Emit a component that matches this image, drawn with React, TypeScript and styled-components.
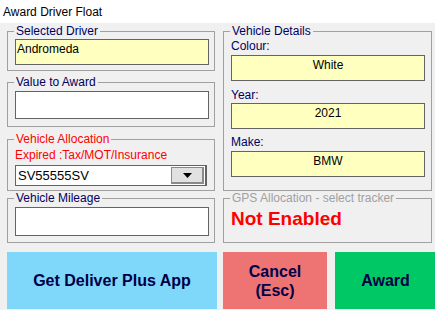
import React, { FC, ReactNode } from 'react'
import styled, { createGlobalStyle } from 'styled-components'

const GlobalStyle = createGlobalStyle`
  html, body {
    margin: 0;
    padding: 0;
    background: #f0f0f0;
  }
  body {
    font-family: "Liberation Sans", Arial, sans-serif;
    font-size: 12px;
  }
`

const Window = styled.div`
  width: 435px;
  height: 310px;
  overflow: hidden;
  background: #f0f0f0;
  display: flex;
  flex-direction: column;
`

const TitleBar = styled.div`
  height: 23px;
  background: #ffffff;
  display: flex;
  align-items: center;
  padding-left: 3px;
  font-size: 12px;
  color: #000000;
`

const Body = styled.div`
  display: flex;
  gap: 8px;
  padding: 8px 0 0 7px;
`

const Column = styled.div<{ $width: number }>`
  width: ${p => p.$width}px;
  display: flex;
  flex-direction: column;
`

const Group = styled.div<{ $height: number; $top?: number }>`
  position: relative;
  box-sizing: border-box;
  height: ${p => p.$height}px;
  margin-top: ${p => p.$top || 0}px;
  border: 1px solid #a0a0a0;
  padding: 7px 5px 0 7px;
  display: flex;
  flex-direction: column;
`

const Legend = styled.span<{ $color?: string }>`
  position: absolute;
  top: -8px;
  left: 6px;
  padding: 0 2px;
  background: #f0f0f0;
  font-size: 12px;
  line-height: 14px;
  color: ${p => p.$color || '#000060'};
`

const Field = styled.div<{ $height: number; $yellow?: boolean; $center?: boolean; $mt?: number }>`
  box-sizing: border-box;
  height: ${p => p.$height}px;
  width: 194px;
  margin-top: ${p => p.$mt || 0}px;
  border: 1px solid #646464;
  background: ${p => (p.$yellow ? '#ffffc0' : '#ffffff')};
  font-size: 12px;
  line-height: 14px;
  padding: 2px 1px;
  text-align: ${p => (p.$center ? 'center' : 'left')};
  color: #000000;
`

const Caption = styled.div<{ $top?: number; $bottom?: number }>`
  font-size: 12px;
  line-height: 14px;
  color: #000060;
  margin: ${p => p.$top || 0}px 0 ${p => p.$bottom || 0}px 0;
`

const Warning = styled.div`
  font-size: 12px;
  line-height: 14px;
  color: #ff0000;
  margin: 1px 0 3px 0;
`

const Combo = styled.div`
  box-sizing: border-box;
  width: 192px;
  height: 21px;
  border: 1px solid #646464;
  border-right-width: 2px;
  background: #ffffff;
  display: flex;
  align-items: center;
  padding: 1px 1px 1px 2px;
  font-size: 13px;
`

const ComboText = styled.span`
  flex: 1;
`

const ComboButton = styled.div`
  box-sizing: border-box;
  width: 33px;
  height: 17px;
  border: 1px solid #8a8a8a;
  border-right-width: 2px;
  border-bottom-width: 2px;
  background: #e1e1e1;
  display: flex;
  align-items: center;
  justify-content: center;
`

const NotEnabled = styled.div`
  font-size: 19px;
  font-weight: bold;
  color: #ff0000;
  line-height: 22px;
  margin-top: 2px;
`

const ButtonRow = styled.div`
  display: flex;
  padding: 9px 0 0 7px;
`

const ActionButton = styled.div<{ $bg: string; $width: number; $gap: number }>`
  width: ${p => p.$width}px;
  height: 57px;
  margin-right: ${p => p.$gap}px;
  flex-shrink: 0;
  background: ${p => p.$bg};
  display: flex;
  align-items: center;
  justify-content: center;
  text-align: center;
  font-size: 16px;
  font-weight: bold;
  line-height: 19px;
  color: #000048;
`

interface GroupBoxProps {
  title: string
  height: number
  top?: number
  color?: string
  children?: ReactNode
}

const GroupBox: FC<GroupBoxProps> = ({ title, height, top, color, children }) => (
  <Group $height={height} $top={top}>
    <Legend $color={color}>{title}</Legend>
    {children}
  </Group>
)

const DownArrow = () => (
  <svg width="9" height="5" viewBox="0 0 9 5">
    <path d="M0 0 H9 L4.5 5 Z" fill="#000000" />
  </svg>
)

export default function App() {
  return (
    <Window>
      <GlobalStyle />
      <TitleBar>Award Driver Float</TitleBar>
      <Body>
        <Column $width={208}>
          <GroupBox title="Selected Driver" height={40}>
            <Field $height={26} $yellow>Andromeda</Field>
          </GroupBox>
          <GroupBox title="Value to Award" height={45} top={11}>
            <Field $height={28} $mt={1} />
          </GroupBox>
          <GroupBox title="Vehicle Allocation" height={52} top={12} color="#ff0000">
            <Warning>Expired :Tax/MOT/Insurance</Warning>
            <Combo>
              <ComboText>SV55555SV</ComboText>
              <ComboButton>
                <DownArrow />
              </ComboButton>
            </Combo>
          </GroupBox>
          <GroupBox title="Vehicle Mileage" height={45} top={7}>
            <Field $height={29} $mt={1} />
          </GroupBox>
        </Column>
        <Column $width={209}>
          <GroupBox title="Vehicle Details" height={160}>
            <Caption $bottom={2}>Colour:</Caption>
            <Field $height={26} $yellow $center>White</Field>
            <Caption $top={7} $bottom={1}>Year:</Caption>
            <Field $height={26} $yellow $center>2021</Field>
            <Caption $top={6} $bottom={2}>Make:</Caption>
            <Field $height={26} $yellow $center>BMW</Field>
          </GroupBox>
          <GroupBox title="GPS Allocation - select tracker" height={45} top={7} color="#a0a0a0">
            <NotEnabled>Not Enabled</NotEnabled>
          </GroupBox>
        </Column>
      </Body>
      <ButtonRow>
        <ActionButton $bg="#7fd7f9" $width={210} $gap={6}>Get Deliver Plus App</ActionButton>
        <ActionButton $bg="#ee7373" $width={104} $gap={8}>Cancel<br />(Esc)</ActionButton>
        <ActionButton $bg="#00c864" $width={101} $gap={0}>Award</ActionButton>
      </ButtonRow>
    </Window>
  )
}
